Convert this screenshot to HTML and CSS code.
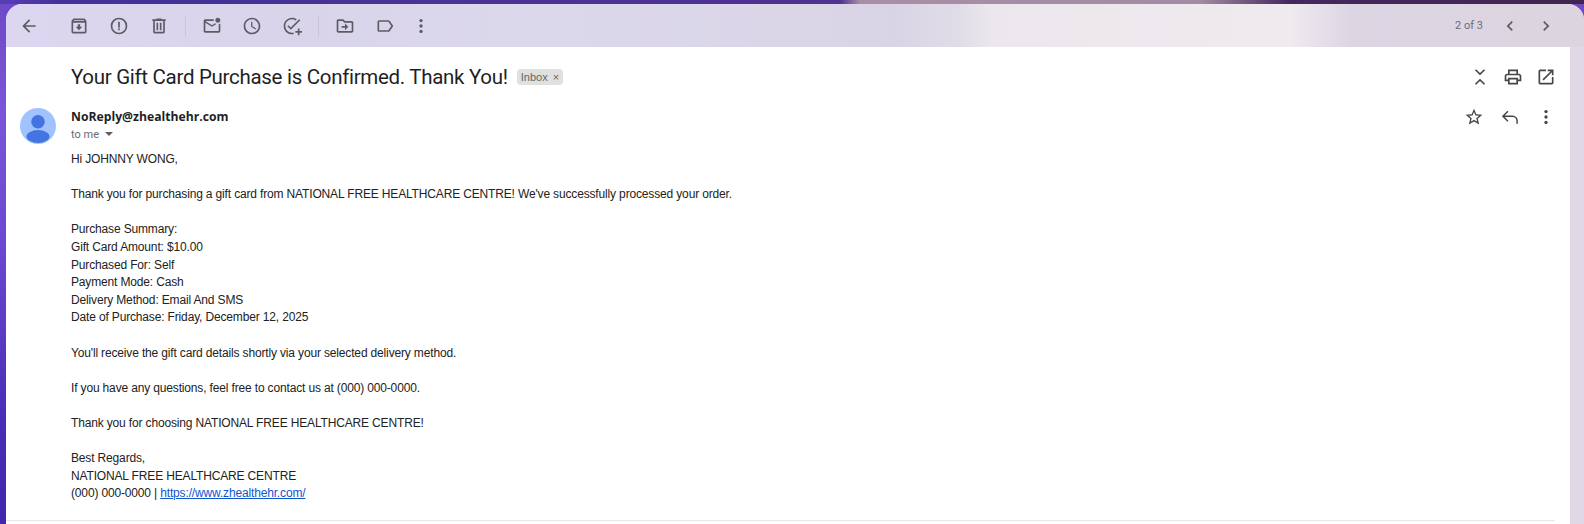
FILE: index.html
```html
<!DOCTYPE html>
<html lang="en">
<head>
  <meta charset="UTF-8" />
  <title>Your Gift Card Purchase is Confirmed. Thank You!</title>
  <link rel="stylesheet" href="styles.css">
</head>
<body>
  <div class="window">
    <!-- Top toolbar -->
    <div class="toolbar">
      <button class="icon-btn back"><svg viewBox="0 0 24 24"><path d="M20 11H7.83l5.59-5.59L12 4l-8 8 8 8 1.41-1.41L7.83 13H20v-2z"/></svg></button>
      <div class="tool-group">
        <button class="icon-btn"><svg viewBox="0 0 24 24"><path d="M20.54 5.23l-1.39-1.68C18.88 3.21 18.47 3 18 3H6c-.47 0-.88.21-1.16.55L3.46 5.23C3.17 5.57 3 6.02 3 6.5V19c0 1.1.9 2 2 2h14c1.1 0 2-.9 2-2V6.5c0-.48-.17-.93-.46-1.27zM6.24 5h11.52l.81.97H5.44l.8-.97zM5 19V8h14v11H5zm8.45-9h-2.9v3H8l4 4 4-4h-2.55z"/></svg></button>
        <button class="icon-btn"><svg viewBox="0 0 24 24"><path d="M12 2a10 10 0 1 0 0 20 10 10 0 0 0 0-20zm0 18a8 8 0 1 1 0-16 8 8 0 0 1 0 16zM11 7h2v7h-2zM11 15h2v2h-2z"/></svg></button>
        <button class="icon-btn"><svg viewBox="0 0 24 24"><path d="M15 4V3H9v1H4v2h1v13c0 1.1.9 2 2 2h10c1.1 0 2-.9 2-2V6h1V4h-5zm2 15H7V6h10v13zM9 8h2v9H9zm4 0h2v9h-2z"/></svg></button>
      </div>
      <span class="sep"></span>
      <div class="tool-group">
        <button class="icon-btn"><svg viewBox="0 0 24 24"><path d="M22 8.98V18c0 1.1-.9 2-2 2H4c-1.1 0-2-.9-2-2V6c0-1.1.9-2 2-2h10.1c-.06.32-.1.66-.1 1s.04.68.1 1H4l8 5 3.67-2.29c.47.43 1.02.76 1.63.98L12 13 4 8v10h16V9.9c.74-.15 1.42-.48 2-.92zM16 5c0 1.66 1.34 3 3 3s3-1.34 3-3-1.34-3-3-3-3 1.34-3 3z"/></svg></button>
        <button class="icon-btn"><svg viewBox="0 0 24 24"><path d="M11.99 2C6.47 2 2 6.48 2 12s4.47 10 9.99 10C17.52 22 22 17.52 22 12S17.52 2 11.99 2zM12 20c-4.42 0-8-3.58-8-8s3.58-8 8-8 8 3.58 8 8-3.58 8-8 8zm.5-13H11v6l5.25 3.15.75-1.23-4.5-2.67z"/></svg></button>
        <button class="icon-btn"><svg viewBox="0 0 24 24"><path d="M22 5.18L10.59 16.6l-4.24-4.24 1.41-1.41 2.83 2.83 10-10L22 5.18zM4 12c0-4.42 3.58-8 8-8 1.58 0 3.04.46 4.28 1.25l1.44-1.44C16.1 2.67 14.13 2 12 2 6.48 2 2 6.48 2 12s4.48 10 10 10c.7 0 1.38-.07 2-.2v-2.06c-.64.17-1.31.26-2 .26-4.42 0-8-3.58-8-8zM19 15v3h-3v2h3v3h2v-3h3v-2h-3v-3z"/></svg></button>
      </div>
      <span class="sep"></span>
      <div class="tool-group">
        <button class="icon-btn"><svg viewBox="0 0 24 24"><path d="M20 6h-8l-2-2H4c-1.1 0-2 .9-2 2v12c0 1.1.9 2 2 2h16c1.1 0 2-.9 2-2V8c0-1.1-.9-2-2-2zm0 12H4V6h5.17l2 2H20v10zM12 9v3H8v2h4v3l4-4z"/></svg></button>
        <button class="icon-btn"><svg viewBox="0 0 24 24"><path d="M17.63 5.84C17.27 5.33 16.67 5 16 5L5 5.01C3.9 5.01 3 5.9 3 7v10c0 1.1.9 1.99 2 1.99L16 19c.67 0 1.27-.33 1.63-.84L22 12l-4.37-6.16zM16 17H5V7h11l3.55 5L16 17z"/></svg></button>
        <button class="icon-btn narrow"><svg viewBox="0 0 24 24"><circle cx="12" cy="5.5" r="2"/><circle cx="12" cy="12" r="2"/><circle cx="12" cy="18.5" r="2"/></svg></button>
      </div>
      <div class="pager">
        <span class="count">2 of 3</span>
        <button class="icon-btn small"><svg viewBox="0 0 24 24"><path d="M15.41 7.41L14 6l-6 6 6 6 1.41-1.41L10.83 12z"/></svg></button>
        <button class="icon-btn small"><svg viewBox="0 0 24 24"><path d="M10 6L8.59 7.41 13.17 12l-4.58 4.59L10 18l6-6z"/></svg></button>
      </div>
    </div>

    <!-- Message -->
    <div class="content">
      <div class="subject-row">
        <h1 class="subject">Your Gift Card Purchase is Confirmed. Thank You!</h1>
        <span class="tag">Inbox <i class="tag-x">×</i></span>
        <div class="subject-actions">
          <button class="icon-btn tight dark"><svg viewBox="0 0 24 24"><path d="M5.9 20 7.3 21.4 12 16.8l4.7 4.6 1.4-1.4L12 14zM18.1 4 16.7 2.600 12 7.200 7.300 2.600 5.900 4 12 10z"/></svg></button>
          <button class="icon-btn tight dark"><svg viewBox="0 0 24 24"><path d="M19 8h-1V3H6v5H5c-1.66 0-3 1.34-3 3v6h4v4h12v-4h4v-6c0-1.66-1.34-3-3-3zM8 5h8v3H8V5zm8 12v2H8v-4h8v2zm2-2v-2H6v2H4v-4c0-.55.45-1 1-1h14c.55 0 1 .45 1 1v4h-2z"/></svg></button>
          <button class="icon-btn tight dark"><svg viewBox="0 0 24 24"><path d="M19 19H5V5h7V3H5c-1.11 0-2 .9-2 2v14c0 1.1.89 2 2 2h14c1.1 0 2-.9 2-2v-7h-2v7zM14 3v2h3.59l-9.83 9.83 1.41 1.41L19 6.41V10h2V3h-7z"/></svg></button>
        </div>
      </div>

      <div class="message">
        <svg class="avatar" viewBox="0 0 36 36">
          <circle cx="18" cy="18" r="18" fill="#a0c3ff"/>
          <circle cx="18" cy="13.700" r="6.800" fill="#4374e0"/>
          <ellipse cx="18" cy="28.500" rx="11.500" ry="6.500" fill="#4374e0"/>
        </svg>
        <div class="message-main">
          <div class="sender-row">
            <div>
              <div class="sender">NoReply@zhealthehr.com</div>
              <div class="to-me">to me <span class="caret"></span></div>
            </div>
            <div class="sender-actions">
              <button class="icon-btn wide dark"><svg viewBox="0 0 24 24"><path d="M22 9.24l-7.19-.62L12 2 9.19 8.63 2 9.24l5.46 4.73L5.82 21 12 17.27 18.18 21l-1.63-7.03L22 9.24zM12 15.4l-3.76 2.27 1-4.28-3.32-2.88 4.38-.38L12 6.1l1.71 4.04 4.38.38-3.32 2.88 1 4.28L12 15.4z"/></svg></button>
              <button class="icon-btn wide dark"><svg viewBox="0 0 24 24"><path class="line" d="M9.5 5 3.500 11l6 6M3.500 11H15a5.500 5.500 0 0 1 5.500 5.500V20"/></svg></button>
              <button class="icon-btn wide dark"><svg viewBox="0 0 24 24"><circle cx="12" cy="5.500" r="2"/><circle cx="12" cy="12" r="2"/><circle cx="12" cy="18.500" r="2"/></svg></button>
            </div>
          </div>
          <div class="body-text">
            <p>Hi JOHNNY WONG,</p>
            <p>Thank you for purchasing a gift card from NATIONAL FREE HEALTHCARE CENTRE! We've successfully processed your order.</p>
            <p>Purchase Summary:<br>Gift Card Amount: $10.00<br>Purchased For: Self<br>Payment Mode: Cash<br>Delivery Method: Email And SMS<br>Date of Purchase: Friday, December 12, 2025</p>
            <p>You'll receive the gift card details shortly via your selected delivery method.</p>
            <p>If you have any questions, feel free to contact us at (000) 000-0000.</p>
            <p>Thank you for choosing NATIONAL FREE HEALTHCARE CENTRE!</p>
            <p>Best Regards,<br>NATIONAL FREE HEALTHCARE CENTRE<br>(000) 000-0000 | <a href="#">https://www.zhealthehr.com/</a></p>
          </div>
        </div>
      </div>
      <div class="divider"></div>
    </div>
  </div>
</body>
</html>
```

FILE: styles.css
```css
/* Reset */
*, *::before, *::after {
  box-sizing: border-box;
}
html, body {
  height: 100%;
}
body {
  margin: 0;
  overflow: hidden;
  padding: 4px 0 0 6px;
  font-family: "Liberation Sans", Arial, sans-serif;
  background:
    linear-gradient(90deg, #5a3db8 0, #43309a 60px, #4a3296 450px, #4d3390 840px, #a88fa6 860px, #a48aa2 1200px, #45275f 1290px, #40254f 1584px) top / 100% 4px no-repeat,
    linear-gradient(180deg, #6f4ac6 0, #7a55d8 110px, #6a48d0 250px, #4a2cb8 420px, #4426ac 524px);
}
.window {
  height: 100%;
  border-radius: 16px 16px 0 0;
  background: #e0d8e4;
  display: flex;
  flex-direction: column;
}
.toolbar {
  height: 43px;
  flex: none;
  display: flex;
  align-items: center;
  padding: 0 20px 0 3px;
  border-radius: 16px 16px 0 0;
  background: linear-gradient(90deg, #dcd6f0 0, #d9d4ea 300px, #dcd8ec 530px, #d9d4e5 890px, #e0dce7 950px, #ebe7ec 985px, #eeeaee 1285px, #dcd6e4 1345px, #dcd5df 1578px);
}
.tool-group {
  display: flex;
}
.sep {
  width: 1px;
  height: 20px;
  margin: 0 6px;
  background: rgba(70, 70, 90, 0.12);
}
.back {
  margin-right: 10px;
}
.icon-btn {
  width: 40px;
  height: 40px;
  padding: 0;
  border: none;
  background: none;
  display: flex;
  align-items: center;
  justify-content: center;
  color: #5c5c64;
}
.icon-btn svg {
  width: 20px;
  height: 20px;
  fill: currentColor;
}
.icon-btn .line {
  fill: none;
  stroke: currentColor;
  stroke-width: 1.8;
}
.icon-btn.narrow {
  width: 32px;
}
.icon-btn.small {
  width: 36px;
}
.icon-btn.tight {
  width: 33px;
}
.icon-btn.wide {
  width: 36px;
}
.icon-btn.dark {
  color: #444746;
}
.pager {
  margin-left: auto;
  display: flex;
  align-items: center;
}
.count {
  font-family: Roboto, sans-serif;
  font-size: 11px;
  color: #6d6c72;
  margin-right: 9px;
}
.content {
  flex: 1;
  margin-right: 14px;
  background: #fff;
  padding-left: 14px;
}
.subject-row {
  height: 59px;
  display: flex;
  align-items: center;
  padding-left: 51px;
  padding-right: 8px;
}
.subject {
  margin: 0;
  font-family: Roboto, sans-serif;
  font-size: 20.5px;
  letter-spacing: -0.3px;
  font-weight: 400;
  color: #1f1f1f;
}
.tag {
  margin-left: 9px;
  padding: 0 4px;
  height: 16px;
  line-height: 16px;
  border-radius: 4px;
  background: #dfe1df;
  font-size: 11px;
  color: #666;
}
.tag-x {
  font-style: normal;
  margin-left: 2px;
}
.subject-actions {
  margin-left: auto;
  display: flex;
}
.message {
  display: flex;
  height: 414px;
}
.avatar {
  width: 36px;
  height: 36px;
  flex: none;
  margin-top: 2px;
}
.message-main {
  flex: 1;
  margin-left: 15px;
  min-width: 0;
}
.sender-row {
  display: flex;
  justify-content: space-between;
  align-items: flex-start;
  padding-right: 6px;
}
.sender {
  font-family: "Open Sans", sans-serif;
  font-size: 12.2px;
  font-weight: 700;
  color: #1f1f1f;
  line-height: 20px;
  padding-top: 1px;
}
.to-me {
  font-family: Roboto, sans-serif;
  font-size: 11px;
  color: #6a6a6a;
  line-height: 16px;
}
.caret {
  display: inline-block;
  margin-left: 3px;
  vertical-align: 2px;
  border-left: 4px solid transparent;
  border-right: 4px solid transparent;
  border-top: 4px solid #5e5e5e;
}
.sender-actions {
  display: flex;
  margin-top: -9px;
}
.body-text {
  margin-top: 8px;
  font-size: 12px;
  letter-spacing: -0.155px;
  line-height: 17.6px;
  color: #222;
}
.body-text p {
  margin: 0 0 17.6px;
}
.body-text a {
  color: #1155cc;
}
.divider {
  height: 1px;
  margin-right: 15px;
  margin-left: -14px;
  background: #e8e8e8;
}
```
